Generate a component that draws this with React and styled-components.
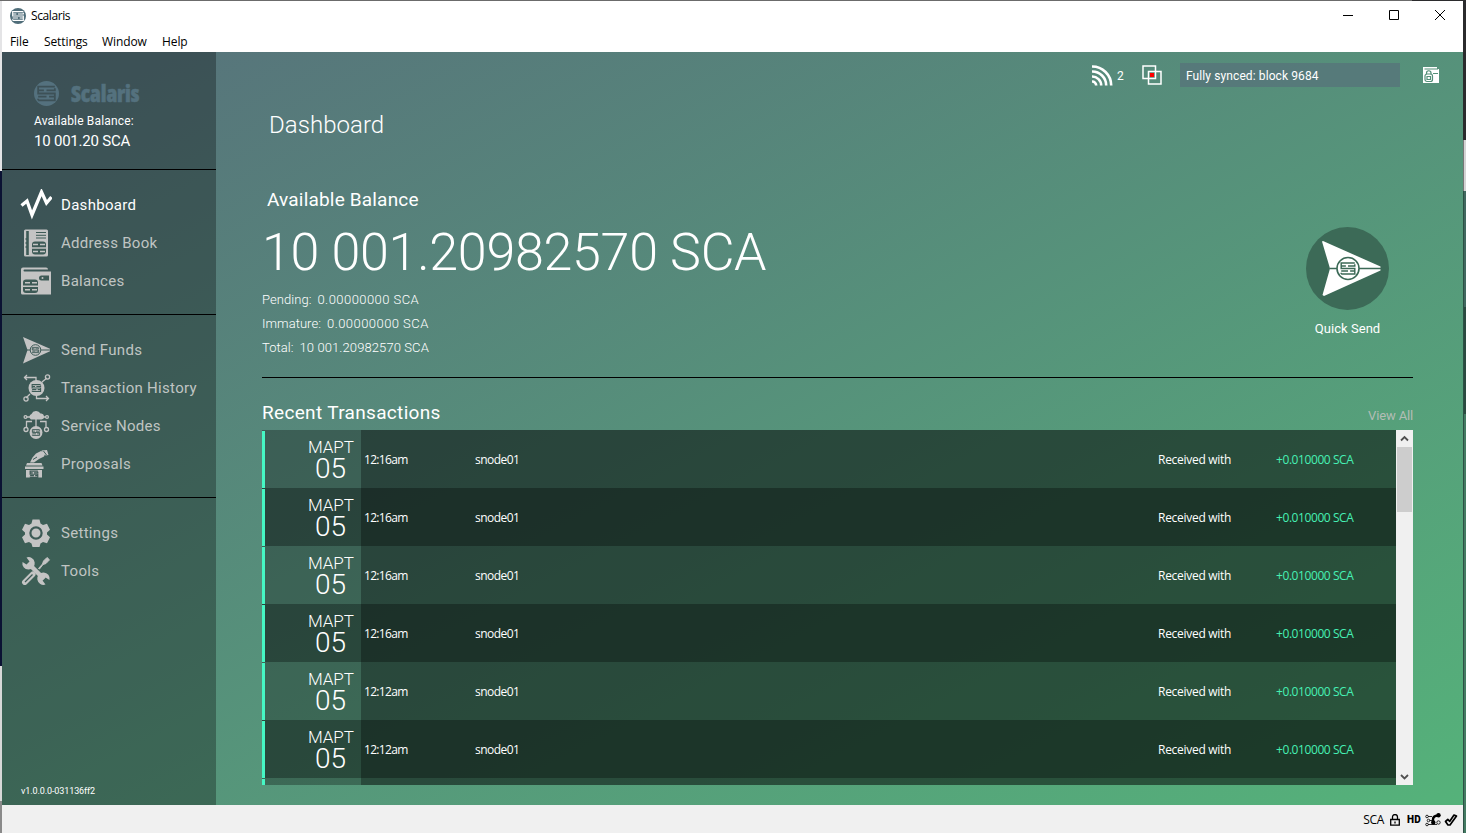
import React from 'react';
import styled, { createGlobalStyle } from 'styled-components';

const Global = createGlobalStyle`
  * { box-sizing: border-box; }
  body { margin: 0; background: #2b2b2d; overflow: hidden; }
  svg { display: block; flex: none; }
`;

const Desktop = styled.div`
  width: 1466px; height: 833px; padding: 1px 3px 0 2px;
  font-family: Roboto, "Liberation Sans", sans-serif;
  background:
    linear-gradient(#6b6b6b, #6b6b6b) 0 0 / 1412px 1px no-repeat,
    linear-gradient(#e4e4e6 0 171px, #0b1233 171px 666px, #d8d8d8 666px 801px, #8a8a8a 801px) 0 0 / 2px 100% no-repeat,
    linear-gradient(#2b2b2d 0 140px, #d4d4d4 140px 191px, #41685f 191px 307px, #2b4a40 307px 414px, #447a62 414px) 100% 0 / 2px 100% no-repeat,
    linear-gradient(#2b2b2d 0 140px, #777 140px 191px, #2c5145 191px);
`;
const Window = styled.div`
  height: 832px; display: flex; flex-direction: column; background: #fff;
`;
const TitleBar = styled.header`
  height: 29px; display: flex; align-items: center; justify-content: space-between;
  padding: 0 17px 0 8px; color: #000;
`;
const Caption = styled.div`
  display: flex; align-items: center; gap: 5px;
  font: 12px/16px "Open Sans", "Noto Sans", sans-serif; letter-spacing: -0.4px;
`;
const CaptionIcon = styled.span`color: #4f6d79;`;
const WindowButtons = styled.div`display: flex; gap: 34px; padding-bottom: 1px;`;
const MenuBar = styled.nav`
  height: 22px; display: flex; gap: 16px; padding: 4px 8px 0;
  font: 12px/16px "Open Sans", "Noto Sans", sans-serif; color: #000;
`;
const MenuItem = styled.span`letter-spacing: -0.1px; width: ${p => p.$w}px; white-space: nowrap;`;
const Body = styled.div`
  height: 753px; display: flex;
  background: linear-gradient(to bottom right, #57717b, #55b27a);
`;
const Sidebar = styled.aside`
  width: 214px; background: rgba(0,0,0,.3); display: flex; flex-direction: column; color: #fff;
`;
const Brand = styled.div`height: 118px; padding: 28px 0 0 32px; border-bottom: 1px solid #000;`;
const Logo = styled.div`height: 26px; display: flex; align-items: center; gap: 12px; color: #54717e;`;
const Wordmark = styled.span`
  font: 800 22px/26px "Open Sans", sans-serif; font-stretch: 75%; -webkit-text-stroke: .5px;
  letter-spacing: -0.2px; white-space: nowrap;
`;
const BrandLabel = styled.div`font-size: 12px; line-height: 16px; margin-top: 7px; letter-spacing: .17px;`;
const BrandAmount = styled.div`font-size: 15px; line-height: 20px; margin-top: 2px; letter-spacing: -.22px; white-space: nowrap;`;
const Group = styled.div`
  padding: 16px 0 14px 18px; border-bottom: ${p => (p.$last ? 0 : 1)}px solid #000;
`;
const NavItem = styled.div`
  height: 38px; display: flex; align-items: center; gap: 9px; padding-bottom: 1px;
  font-size: 15px; letter-spacing: .3px; color: ${p => (p.$active ? '#fff' : '#c0c5c3')};
  svg { color: ${p => (p.$active ? '#fff' : '#c4c4c4')}; }
`;
const Version = styled.div`margin: auto 0 8px 19px; font-size: 9px; line-height: 12px; letter-spacing: -.1px;`;

const Main = styled.main`flex: 1; padding: 11px 50px 0 46px; color: #fff;`;
const TopBar = styled.div`
  height: 24px; margin-right: -27px; display: flex; align-items: center; justify-content: flex-end;
`;
const Peers = styled.span`font-size: 12px; margin: 1px 17px 0 4px; width: 8px;`;
const SyncStatus = styled.div`
  width: 220px; height: 24px; margin: 0 23px 0 18px; padding-left: 6px;
  background: rgba(87,113,123,.7); font-size: 12px; line-height: 26px; letter-spacing: .1px;
`;
const PageTitle = styled.h1`
  margin: 22px 0 0 7px; font-size: 24px; line-height: 32px; font-weight: 300; letter-spacing: .05px;
`;
const Summary = styled.section`
  height: 237px; padding-top: 47px; display: flex; justify-content: space-between; border-bottom: 1px solid #000;
`;
const SectionTitle = styled.h2`
  margin: 0 0 0 ${p => p.$indent || 0}px; font-size: 19px; line-height: 24px; font-weight: 400;
  letter-spacing: ${p => p.$ls}px;
`;
const BigAmount = styled.div`
  margin: 11px 0 5px 0; font-size: 52px; line-height: 60px; font-weight: 300; white-space: nowrap; height: 60px;
  letter-spacing: -.29px;
`;
const Detail = styled.div`
  display: flex; gap: 6px; font-size: 13px; line-height: 24px; font-weight: 300; letter-spacing: .05px; white-space: nowrap;
`;
const DetailValue = styled.span`letter-spacing: ${p => p.$ls}px;`;
const QuickSend = styled.div`
  width: 83px; margin: 39px 24px 0 0; display: flex; flex-direction: column; align-items: center; gap: 11px;
  font-size: 13px; line-height: 16px; letter-spacing: .05px; white-space: nowrap;
`;
const ListHeader = styled.div`
  height: 52px; padding-top: 23px; display: flex; justify-content: space-between;
`;
const ViewAll = styled.a`font-size: 13px; line-height: 30px; letter-spacing: -.15px; color: #b3bdb6;`;
const List = styled.div`height: 355px; display: flex;`;
const Rows = styled.div`flex: 1; overflow: hidden; background: rgba(0,0,0,.3);`;
const Row = styled.div`
  height: ${p => p.$h}px; overflow: hidden;
  display: grid; grid-template-columns: 99px 114px 683px 118px 1fr;
  background: ${p => (p.$dark ? 'rgba(0,0,0,.3)' : 'transparent')};
  font: 12px/16px "Open Sans", "Noto Sans", sans-serif;
`;
const DateCell = styled.div`
  margin: 1px 0; border-left: 3px solid #46f7c4; text-align: right; font-family: Roboto, sans-serif; font-weight: 300;
`;
const Month = styled.div`font-size: 17px; line-height: 20px; padding: 6px 7px 0 0;`;
const Day = styled.div`font-size: 28px; line-height: 24px; padding-right: 15px;`;
const Cell = styled.div`
  line-height: 60px; padding-left: ${p => p.$pad || 0}px; white-space: nowrap;
  letter-spacing: ${p => p.$ls || 0}px; color: ${p => p.$color || '#fff'};
  background: rgba(0,0,0,.3);
`;
const Scrollbar = styled.div`
  width: 17px; background: #f0f0f0; display: flex; flex-direction: column; align-items: center; justify-content: space-between;
`;
const ScrollTop = styled.div`display: flex; flex-direction: column; align-items: center;`;
const Thumb = styled.div`width: 15px; height: 65px; background: #cdcdcd;`;
const StatusBar = styled.footer`
  height: 28px; background: #f0f0f0; color: #000; display: flex; align-items: center; justify-content: flex-end;
  padding: 1px 5px 0 0; font: 12px/16px "Open Sans", sans-serif;
`;
const Unit = styled.span`margin-right: 6px; letter-spacing: -0.3px;`;
const Hd = styled.b`font: 900 10px/12px Roboto, sans-serif; margin: 0 4px 0 7px; letter-spacing: .2px;`;

const MARK = 'M20 5.5H4V12H20V18.500H4M4 9H9.500M12 9H20V7M4 15H12M14.500 15H20M4 18.500V17';

const Glyph = ({ x, y, s, color = 'currentColor', w = 2 }) => (
  <path transform={`translate(${x} ${y}) scale(${s})`} d={MARK} fill="none" stroke={color} strokeWidth={w} />
);
const Coin = ({ size, ink }) => (
  <svg width={size} height={size} viewBox="0 0 24 24">
    <circle cx="12" cy="12" r="12" fill="currentColor" />
    <Glyph x={0} y={0} s={1} color={ink} w={1.7} />
  </svg>
);
const HOLE = '#3d5a56';

const icons = {
  dashboard: <path d="M1.500 16.500l5.500-4.500 5 14L21.500 3l5 11 5-6" fill="none" stroke="currentColor" strokeWidth="3.300" />,
  book: <>
    <rect x="4" y="2.500" width="24" height="27" rx="1.500" fill="currentColor" />
    <path d="M7.500 4v24" stroke={HOLE} strokeWidth="2.600" />
    <path d="M5.500 12h2M5.500 16h2M5.500 20h2" stroke={HOLE} strokeWidth="1.500" />
    <path d="M16 5.500h10M16 8.300h10M16 11h10" stroke={HOLE} strokeWidth="1" />
    <rect x="12" y="14.500" width="14" height="13" rx="3" fill={HOLE} />
    <path d="M11 21h16M13 17.500h5M20 17.500h5M13 24.500h5M20 24.500h5" stroke="currentColor" strokeWidth="1.500" />
  </>,
  wallet: <>
    <path d="M3 2.500h23a2 2 0 0 1 2 2H4.500a1 1 0 0 0 0 2H31v23H2.500A1.500 1.500 0 0 1 1 28V4.500a2 2 0 0 1 2-2z" fill="currentColor" />
    <path d="M21.500 10.500H29v5h-7.500a2.500 2.500 0 0 1 0-5z" fill={HOLE} />
    <circle cx="22.500" cy="13" r="1" fill="currentColor" />
    <rect x="3" y="14.500" width="15" height="13.500" rx="3" fill={HOLE} />
    <path d="M2 21.300h17M5 17.800h5M12 17.800h5M5 24.800h5M12 24.800h5" stroke="currentColor" strokeWidth="1.600" />
  </>,
  send: <>
    <path d="M3 3L30 14.800v2.400L3 29.500 7.500 16z" fill="currentColor" />
    <path d="M7 16h23" stroke={HOLE} strokeWidth="1" />
    <circle cx="15.500" cy="16" r="5.300" fill="currentColor" stroke={HOLE} />
    <Glyph x={10.700} y={11.200} s={0.400} color={HOLE} w={2.200} />
  </>,
  history: <>
    <g fill="none" stroke="currentColor" strokeWidth="1.300">
      <path d="M4 5.500h12v4M7 3L4.500 5.500 7 8M28.500 26.500h-12v-4M26 24l2.500 2.500L26 29M22 10l5-4M10 22l-4 4" />
      <circle cx="27.500" cy="5" r="2.100" /><circle cx="6" cy="27" r="2.100" />
    </g>
    <circle cx="16.500" cy="16" r="8" fill="currentColor" />
    <Glyph x={10} y={9.700} s={0.530} color={HOLE} w={2} />
  </>,
  nodes: <>
    <path d="M11 9.500a3 3 0 0 1 .5-5.500 5 5 0 0 1 9-.5 3 3 0 0 1 1 6z" fill="currentColor" />
    <g fill="none" stroke="currentColor" strokeWidth="1.300">
      <path d="M7 7h5M20 7h6M16 9v9M12 11.500H6.500V18M20 11.500h6V18" />
      <circle cx="5.500" cy="7" r="1.400" /><circle cx="27" cy="7" r="1.400" />
      <circle cx="6" cy="19.500" r="2" /><circle cx="26.500" cy="19.500" r="2" />
    </g>
    <circle cx="16" cy="22.500" r="6.500" fill="currentColor" />
    <Glyph x={10.600} y={17.100} s={0.450} color={HOLE} w={2} />
  </>,
  vote: <>
    <path d="M7 15h14.500l1 2.500H6zM5 18.500h18.500v2.500H5zM6 22h16v7.500H6z" fill="currentColor" />
    <path d="M10 14.500l2.500-5 3.500-4 5-2.500 4.500 2-1.500 3.500-5 2.500-5 3.500z" fill="currentColor" />
    <path d="M21.500 2.500l5.500-.5 1.500 5-3 .5z" fill="currentColor" />
    <path d="M23.500 3l3 4M13 11.500l4-2.500" stroke={HOLE} strokeWidth="1" />
    <Glyph x={8.200} y={20.500} s={0.480} color={HOLE} w={2.400} />
  </>,
  gear: <>
    <path d="M12.500 2.500h7l1 4 2.500 1.500 4-1.300 3 6-3 2.800v2l3 2.800-3 6-4-1.300-2.500 1.500-1 3.500h-7l-1-3.500L9 25l-4 1.300-3-6 3-2.800v-2l-3-2.800 3-6L9 8l2.500-1.500z" fill="currentColor" />
    <circle cx="16" cy="16" r="5.600" fill="currentColor" stroke={HOLE} strokeWidth="2.200" />
  </>,
  tools: <>
    <path d="M9 9l15 15" stroke="currentColor" strokeWidth="4.500" />
    <path d="M6.500 2.500a6.200 6.200 0 1 1-4 4.500l4 2.500 3-3zM25.500 29.500a6.200 6.200 0 1 1 4-4.500l-4-2.500-3 3z" fill="currentColor" />
    <path d="M18.500 13.500l4-4.500 1-3L27 2.500l2.500 2.300L26 8.500l-3 1-3.500 4.500z" fill="currentColor" stroke="currentColor" />
    <path d="M4.800 27.200l8-8" stroke="currentColor" strokeWidth="5.500" strokeLinecap="round" />
    <path d="M5 27l7.500-7.500" stroke={HOLE} strokeWidth="1.200" />
  </>,
};
const Icon = ({ name }) => <svg width="32" height="32" viewBox="0 0 32 32">{icons[name]}</svg>;

const groups = [
  [['dashboard', 'Dashboard'], ['book', 'Address Book'], ['wallet', 'Balances']],
  [['send', 'Send Funds'], ['history', 'Transaction History'], ['nodes', 'Service Nodes'], ['vote', 'Proposals']],
  [['gear', 'Settings'], ['tools', 'Tools']],
];
const times = ['12:16am', '12:16am', '12:16am', '12:16am', '12:12am', '12:12am'];

export default function App() {
  return (
    <Desktop>
      <Global />
      <Window>
        <TitleBar>
          <Caption><CaptionIcon><Coin size={16} ink="#fff" /></CaptionIcon>Scalaris</Caption>
          <WindowButtons>
            <svg width="12" height="12"><path d="M1 6.500h10" stroke="#000" /></svg>
            <svg width="12" height="12"><path d="M1.500 1.500h9v9h-9z" stroke="#000" fill="none" /></svg>
            <svg width="12" height="12"><path d="M1 1l10 10M11 1L1 11" stroke="#000" /></svg>
          </WindowButtons>
        </TitleBar>
        <MenuBar>
          <MenuItem $w={18}>File</MenuItem><MenuItem $w={42}>Settings</MenuItem>
          <MenuItem $w={44}>Window</MenuItem><MenuItem $w={26}>Help</MenuItem>
        </MenuBar>
        <Body>
          <Sidebar>
            <Brand>
              <Logo><Coin size={25} ink="#3d5157" /><Wordmark>Scalaris</Wordmark></Logo>
              <BrandLabel>Available Balance:</BrandLabel>
              <BrandAmount>10 001.20 SCA</BrandAmount>
            </Brand>
            {groups.map((items, i) => (
              <Group key={i} $last={i === 2}>
                {items.map(([icon, label]) => (
                  <NavItem key={icon} $active={icon === 'dashboard'}><Icon name={icon} />{label}</NavItem>
                ))}
              </Group>
            ))}
            <Version>v1.0.0.0-031136ff2</Version>
          </Sidebar>
          <Main>
            <TopBar>
              <svg width="21" height="21" viewBox="0 0 21 21" fill="none" stroke="#fff" strokeWidth="2.600">
                <path d="M0 1.500A19 19 0 0 1 19.200 20.500M0 6.500A14 14 0 0 1 14.200 20.500M0 11.500A9 9 0 0 1 9.200 20.500M0 16.500a4 4 0 0 1 4.200 4" />
              </svg>
              <Peers>2</Peers>
              <svg width="20" height="20" viewBox="0 0 20 20">
                <path d="M1 1h12.500v12.500H1zM6.500 6.500H19V19H6.500z" fill="none" stroke="#fff" strokeWidth="1.500" />
                <path d="M8 8h4v4H8z" fill="#f00" />
              </svg>
              <SyncStatus>Fully synced: block 9684</SyncStatus>
              <svg width="17" height="17" viewBox="0 0 17 17">
                <path d="M0 0h14v2h2v14H0z" fill="#fff" />
                <path d="M1.500 2H15M10 6.500h5" stroke="#548f78" strokeWidth="1.200" />
                <rect x="2" y="7" width="7.500" height="7.500" rx="2" fill="#fff" stroke="#548f78" strokeWidth="1.200" />
                <path d="M3.500 7.500V6a2.200 2.200 0 0 1 4.500 0v1.500M4 9.500h3.500v3H4z" fill="none" stroke="#548f78" strokeWidth="1.200" />
              </svg>
            </TopBar>
            <PageTitle>Dashboard</PageTitle>
            <Summary>
              <div>
                <SectionTitle $indent={5} $ls={0.18}>Available Balance</SectionTitle>
                <BigAmount>10 001.20982570 SCA</BigAmount>
                <Detail>Pending:<DetailValue $ls={0.45}>0.00000000 SCA</DetailValue></Detail>
                <Detail>Immature:<DetailValue $ls={0.45}>0.00000000 SCA</DetailValue></Detail>
                <Detail>Total:<DetailValue $ls={0.1}>10 001.20982570 SCA</DetailValue></Detail>
              </div>
              <QuickSend>
                <svg width="83" height="83" viewBox="0 0 83 83">
                  <circle cx="41.500" cy="41.500" r="41.500" fill="#3c6a57" />
                  <path d="M17 14l57.500 25.500v4L18 69l-1.500-1L24 41.500l-8-27z" fill="#fff" />
                  <path d="M24 41.500h51" stroke="#3c6a57" strokeWidth="1.600" />
                  <circle cx="42" cy="41.500" r="11" fill="#fff" stroke="#3c6a57" strokeWidth="1.600" />
                  <Glyph x={31.800} y={31.300} s={0.850} color="#3c6a57" w={1.700} />
                </svg>
                Quick Send
              </QuickSend>
            </Summary>
            <ListHeader><SectionTitle $ls={0.33}>Recent Transactions</SectionTitle><ViewAll>View All</ViewAll></ListHeader>
            <List>
              <Rows>
                {times.map((t, i) => (
                  <Row key={i} $h={58} $dark={i % 2 === 1}>
                    <DateCell><Month>МАРТ</Month><Day>05</Day></DateCell>
                    <Cell $pad={3} $ls={-0.68}>{t}</Cell>
                    <Cell $ls={-0.55}>snode01</Cell>
                    <Cell $ls={-0.28}>Received with</Cell>
                    <Cell $ls={-0.42} $color="#46f0b4">+0.010000 SCA</Cell>
                  </Row>
                ))}
                <Row $h={8}><DateCell /><Cell /><Cell /><Cell /><Cell /></Row>
              </Rows>
              <Scrollbar>
                <ScrollTop>
                  <svg width="17" height="17"><path d="M5 10.500l3.500-3.500 3.500 3.500" fill="none" stroke="#505050" strokeWidth="1.800" /></svg>
                  <Thumb />
                </ScrollTop>
                <svg width="17" height="17"><path d="M5 7l3.500 3.500L12 7" fill="none" stroke="#505050" strokeWidth="1.800" /></svg>
              </Scrollbar>
            </List>
          </Main>
        </Body>
        <StatusBar>
          <Unit>SCA</Unit>
          <svg width="10" height="12" viewBox="0 0 10 12" fill="none" stroke="#000" strokeWidth="1.300">
            <path d="M.700 5.500h8.600v5.700H.700zM2.500 5.500V3a2.500 2.500 0 0 1 5 0v2.500M5 7.500v2" />
          </svg>
          <Hd>HD</Hd>
          <svg width="16" height="14" viewBox="0 0 16 14" fill="none" stroke="#000">
            <path d="M3 3.500h4M4.500 7.500h3M3 11.500h9" strokeWidth=".8" />
            <g strokeWidth=".8"><circle cx="2" cy="3.500" r="1.300" /><circle cx="3.500" cy="7.500" r="1.300" /><circle cx="2" cy="11.500" r="1.300" /><circle cx="13.500" cy="9.500" r="1.700" /></g>
            <path d="M8 9.500V6.500C8 4 9.500 2.800 13 2.500" strokeWidth="2.400" />
            <g fill="#000" stroke="none"><circle cx="13.500" cy="2.300" r="2.200" /><circle cx="8.300" cy="9.500" r="2.200" /></g>
          </svg>
          <svg width="17" height="14" viewBox="0 0 17 14" fill="none" stroke="#000" strokeWidth="1.700" strokeLinejoin="round">
            <path d="M4.500 8.500l2.300-2 2 1.800L13 2l2.500 1L9 12H7z" />
          </svg>
        </StatusBar>
      </Window>
    </Desktop>
  );
}
